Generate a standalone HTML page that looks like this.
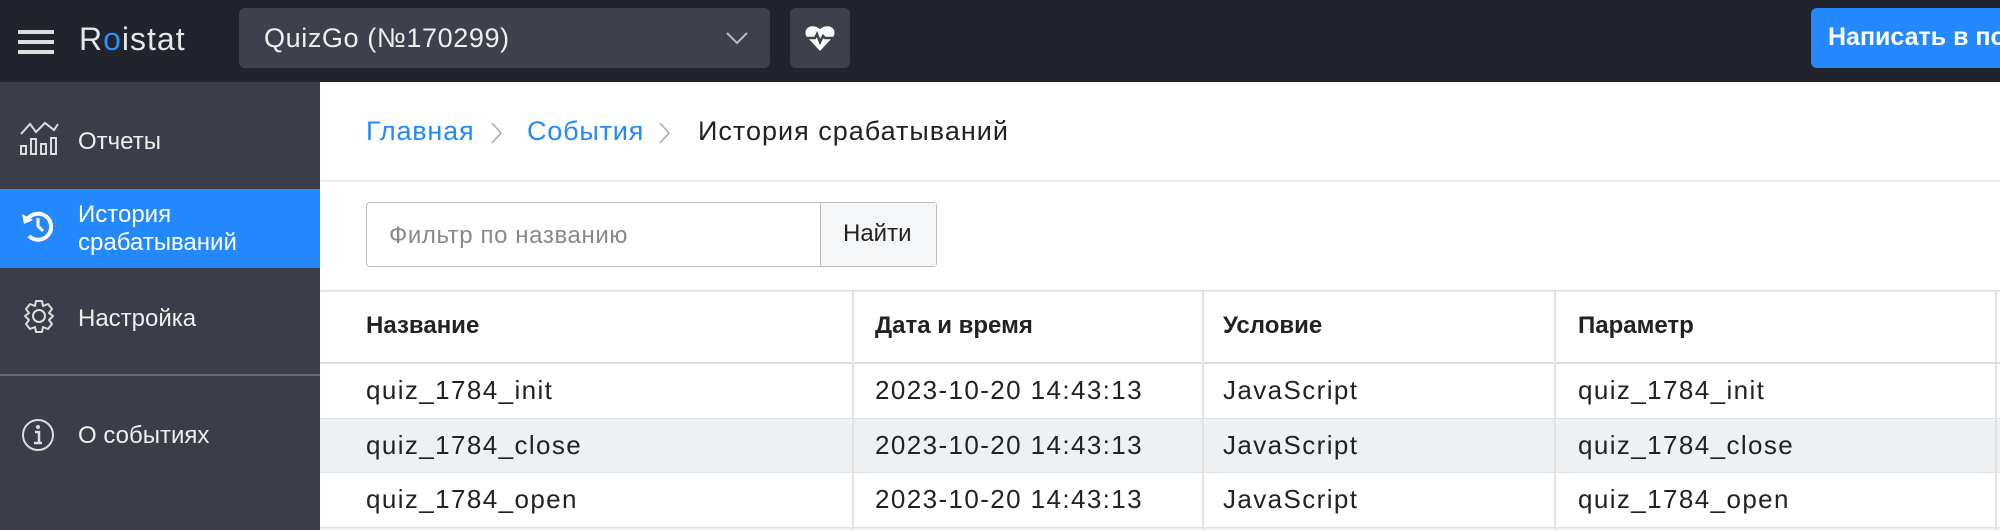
<!DOCTYPE html>
<html><head><meta charset="utf-8"><style>
*{margin:0;padding:0;box-sizing:border-box}
body{width:2000px;height:530px;overflow:hidden;background:#fff;font-family:"Liberation Sans","Noto Sans CJK SC",sans-serif;position:relative}
.a{position:absolute}
.hdr{left:0;top:0;width:2000px;height:82px;background:#21242c}
.side{left:0;top:82px;width:320px;height:448px;background:#3b3e48}
.t{white-space:nowrap}
.cell{position:absolute;font-size:26px;color:#222;white-space:nowrap;letter-spacing:1.4px}
.cell.h{font-size:24px;letter-spacing:0;font-weight:bold}
</style></head><body>
<div class="a hdr"></div>
<div class="a" style="left:18px;top:30px;width:36px;height:4px;background:#ddd"></div>
<div class="a" style="left:18px;top:40px;width:36px;height:4px;background:#ddd"></div>
<div class="a" style="left:18px;top:50px;width:36px;height:4px;background:#ddd"></div>
<div class="a t" style="left:79px;top:21px;font-size:32px;color:#e6e6e6;letter-spacing:1px">R<span style="color:#2b8fff">o</span>istat</div>
<div class="a" style="left:239px;top:8px;width:531px;height:60px;background:#3e414b;border-radius:6px"></div>
<div class="a t" style="left:264px;top:23px;font-size:27px;color:#eee;letter-spacing:0.6px">QuizGo (№170299)</div>
<svg class="a" style="left:725px;top:30px" width="24" height="16"><path d="M2 3 L12 13 L22 3" stroke="#bbb" stroke-width="2" fill="none"/></svg>
<div class="a" style="left:790px;top:8px;width:60px;height:60px;background:#3e414b;border-radius:6px"></div>
<svg class="a" style="left:804px;top:22px" width="32" height="32" viewBox="0 0 32 32"><path d="M16 29 L3 15 C-2 8 6 0 16 7 C26 0 34 8 29 15 Z" fill="#fff"/><path d="M3 16 H11 L13 12 L16 20 L19 14 L21 16 H29" stroke="#3e414b" stroke-width="2.5" fill="none"/></svg>
<div class="a" style="left:1811px;top:8px;width:189px;height:60px;background:#2488ff;border-radius:6px 0 0 6px;overflow:hidden">
<div class="a t" style="left:17px;top:15px;font-size:25px;color:#fff;font-weight:bold">Написать в поддержку</div></div>

<div class="a side"></div>
<div class="a" style="left:0;top:189px;width:320px;height:79px;background:#2488ff"></div>
<div class="a" style="left:0;top:374px;width:320px;height:2px;background:#666a73"></div>
<svg class="a" style="left:18px;top:120px" width="42" height="36" viewBox="0 0 42 36"><path d="M3 14 L12 4 L18 12 L27 3 L36 10 L40 4" stroke="#ddd" stroke-width="2" fill="none"/><rect x="3" y="26" width="5" height="8" fill="none" stroke="#ddd" stroke-width="2"/><rect x="13" y="19" width="5" height="15" fill="none" stroke="#ddd" stroke-width="2"/><rect x="23" y="24" width="5" height="10" fill="none" stroke="#ddd" stroke-width="2"/><rect x="33" y="18" width="5" height="16" fill="none" stroke="#ddd" stroke-width="2"/></svg>
<div class="a t" style="left:78px;top:128px;font-size:24px;color:#eee">Отчеты</div>
<svg class="a" style="left:20px;top:208px" width="36" height="36" viewBox="0 0 36 36"><path d="M7 12 A13 13 0 1 1 9 28" stroke="#fff" stroke-width="4" fill="none"/><path d="M2 6 L4 16 L13 12 Z" fill="#fff"/><path d="M18 10 V18 L23 23" stroke="#fff" stroke-width="3" fill="none"/></svg>
<div class="a" style="left:78px;top:201px;font-size:24px;color:#fff;line-height:28px">История<br>срабатываний</div>
<svg class="a" style="left:22px;top:298px" width="34" height="36" viewBox="0 0 34 36"><circle cx="17" cy="18" r="6" stroke="#ddd" stroke-width="2" fill="none"/><path d="M14 3 H20 L21 8 L26 6 L30 11 L27 15 L31 18 L27 22 L30 26 L26 31 L21 29 L20 34 H14 L13 29 L8 31 L4 26 L7 22 L3 18 L7 15 L4 11 L8 6 L13 8 Z" stroke="#ddd" stroke-width="2" fill="none" stroke-linejoin="round"/></svg>
<div class="a t" style="left:78px;top:305px;font-size:24px;color:#eee">Настройка</div>
<svg class="a" style="left:20px;top:417px" width="36" height="36"><circle cx="18" cy="18" r="15" stroke="#ddd" stroke-width="2" fill="none"/><circle cx="18" cy="10" r="2" fill="#ddd"/><path d="M15 15 H19 V26 M14 26 H22" stroke="#ddd" stroke-width="2.5" fill="none"/></svg>
<div class="a t" style="left:78px;top:422px;font-size:24px;color:#eee;height:22px;overflow:hidden">О событиях</div>

<div class="a t" style="left:366px;top:116px;font-size:27px;color:#2488ff;letter-spacing:0.8px">Главная</div>
<svg class="a" style="left:490px;top:121px" width="14" height="24"><path d="M2 2 L11 12 L2 22" stroke="#aaa" stroke-width="1.5" fill="none"/></svg>
<div class="a t" style="left:527px;top:116px;font-size:27px;color:#2488ff;letter-spacing:0.8px">События</div>
<svg class="a" style="left:658px;top:121px" width="14" height="24"><path d="M2 2 L11 12 L2 22" stroke="#aaa" stroke-width="1.5" fill="none"/></svg>
<div class="a t" style="left:698px;top:116px;font-size:27px;color:#222;letter-spacing:1px">История срабатываний</div>
<div class="a" style="left:320px;top:180px;width:1680px;height:2px;background:#ececec"></div>

<div class="a" style="left:366px;top:202px;width:571px;height:65px;border:1.5px solid #bbb;border-radius:4px"></div>
<div class="a" style="left:820px;top:203px;width:116px;height:63px;background:#f5f6f7;border-left:1.5px solid #bbb"></div>
<div class="a t" style="left:389px;top:222px;font-size:24px;color:#888;letter-spacing:0.6px">Фильтр по названию</div>
<div class="a t" style="left:843px;top:220px;font-size:24px;color:#222">Найти</div>

<div class="a" style="left:320px;top:290px;width:1680px;height:2px;background:#e2e2e2"></div>
<div class="a" style="left:320px;top:362px;width:1680px;height:2px;background:#ddd"></div>
<div class="a" style="left:320px;top:418px;width:1680px;height:55px;background:#eef1f4;border-top:1px solid #e2e2e2;border-bottom:1px solid #e2e2e2"></div>
<div class="a" style="left:320px;top:527px;width:1680px;height:3px;background:#eef1f4;border-top:1px solid #e2e2e2"></div>
<div class="a" style="left:852px;top:290px;width:2px;height:240px;background:#e2e2e2"></div>
<div class="a" style="left:1202px;top:290px;width:2px;height:240px;background:#e2e2e2"></div>
<div class="a" style="left:1554px;top:290px;width:2px;height:240px;background:#e2e2e2"></div>
<div class="a" style="left:1995px;top:290px;width:2px;height:240px;background:#e2e2e2"></div>

<div class="cell h" style="left:366px;top:312px">Название</div>
<div class="cell h" style="left:875px;top:312px">Дата и время</div>
<div class="cell h" style="left:1223px;top:312px">Условие</div>
<div class="cell h" style="left:1578px;top:312px">Параметр</div>

<div class="cell" style="left:366px;top:375px">quiz_1784_init</div>
<div class="cell" style="left:875px;top:375px">2023-10-20 14:43:13</div>
<div class="cell" style="left:1223px;top:375px">JavaScript</div>
<div class="cell" style="left:1578px;top:375px">quiz_1784_init</div>

<div class="cell" style="left:366px;top:430px">quiz_1784_close</div>
<div class="cell" style="left:875px;top:430px">2023-10-20 14:43:13</div>
<div class="cell" style="left:1223px;top:430px">JavaScript</div>
<div class="cell" style="left:1578px;top:430px">quiz_1784_close</div>

<div class="cell" style="left:366px;top:484px">quiz_1784_open</div>
<div class="cell" style="left:875px;top:484px">2023-10-20 14:43:13</div>
<div class="cell" style="left:1223px;top:484px">JavaScript</div>
<div class="cell" style="left:1578px;top:484px">quiz_1784_open</div>
</body></html>
